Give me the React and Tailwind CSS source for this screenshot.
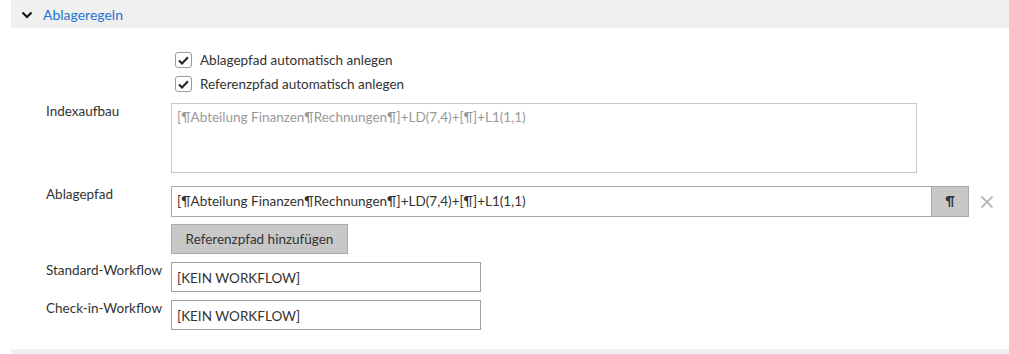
export default function App() {
  const font = { fontFamily: 'Lato, "Open Sans", sans-serif' };
  return (
    <div className="w-[1009px] h-[354px] bg-white pl-[11px] text-[13.5px] text-[#333]" style={font}>
      <div className="h-[28px] bg-[#f0f0f0] flex items-center pl-[10px]">
        <svg width="12" height="8" viewBox="0 0 12 8" className="mt-[1px]">
          <path d="M1.5 1.5 L6 6 L10.5 1.5" fill="none" stroke="#111" strokeWidth="2.2" />
        </svg>
        <span className="ml-[10px] text-[14px] text-[#1b74d0]">Ablageregeln</span>
      </div>

      <div className="pl-[35px]">
        <div className="pl-[125px] pt-[20px] flex flex-col">
          {["Ablagepfad automatisch anlegen", "Referenzpfad automatisch anlegen"].map((t) => (
            <label key={t} className="h-[24px] flex items-center">
              <span className="ml-[4px] w-[17px] h-[16px] rounded-[3px] border border-[#9a9a9a] bg-white flex items-center justify-center">
                <svg width="11" height="9" viewBox="0 0 11 9">
                  <path d="M1 4.5 L4 7.5 L10 1.2" fill="none" stroke="#222" strokeWidth="2" />
                </svg>
              </span>
              <span className="ml-[8px]">{t}</span>
            </label>
          ))}
        </div>

        <div className="flex items-start mt-[7px]">
          <div className="w-[125px] -mt-[1px] leading-[18px]">Indexaufbau</div>
          <div className="w-[746px] h-[70px] border border-[#c8c8c8] px-[5px] pt-[4px] leading-[18px] text-[#999]">
            [¶Abteilung Finanzen¶Rechnungen¶]+LD(7,4)+[¶]+L1(1,1)
          </div>
        </div>

        <div className="flex items-start mt-[13px]">
          <div className="w-[125px] -mt-[1px] leading-[18px]">Ablagepfad</div>
          <div className="flex items-center">
            <div className="w-[761px] h-[31px] border border-[#a8a8a8] flex items-center px-[5px]">
              [¶Abteilung Finanzen¶Rechnungen¶]+LD(7,4)+[¶]+L1(1,1)
            </div>
            <div className="w-[38px] h-[31px] -ml-px bg-[#c8c8c8] border border-[#a8a8a8] flex items-center justify-center text-[#333] font-bold text-[13px]">
              ¶
            </div>
            <svg width="14" height="14" viewBox="0 0 14 14" className="ml-[11px]">
              <path d="M1.5 1.5 L12.5 12.5 M12.5 1.5 L1.5 12.5" stroke="#bbb" strokeWidth="2" />
            </svg>
          </div>
        </div>

        <div className="pl-[125px] mt-[7px]">
          <div className="w-[177px] h-[30px] bg-[#c8c8c8] border border-[#a8a8a8] flex items-center justify-center text-[#333]">
            Referenzpfad hinzufügen
          </div>
        </div>

        {["Standard-Workflow", "Check-in-Workflow"].map((l) => (
          <div key={l} className="flex items-start mt-[8px]">
            <div className="w-[125px] -mt-[1px] leading-[18px]">{l}</div>
            <div className="w-[310px] h-[30px] border border-[#a0a0a0] flex items-center px-[5px] pt-[2px]">
              [KEIN WORKFLOW]
            </div>
          </div>
        ))}
      </div>

      <div className="mt-[19px] h-[6px] bg-[#f0f0f0]" />
    </div>
  );
}
